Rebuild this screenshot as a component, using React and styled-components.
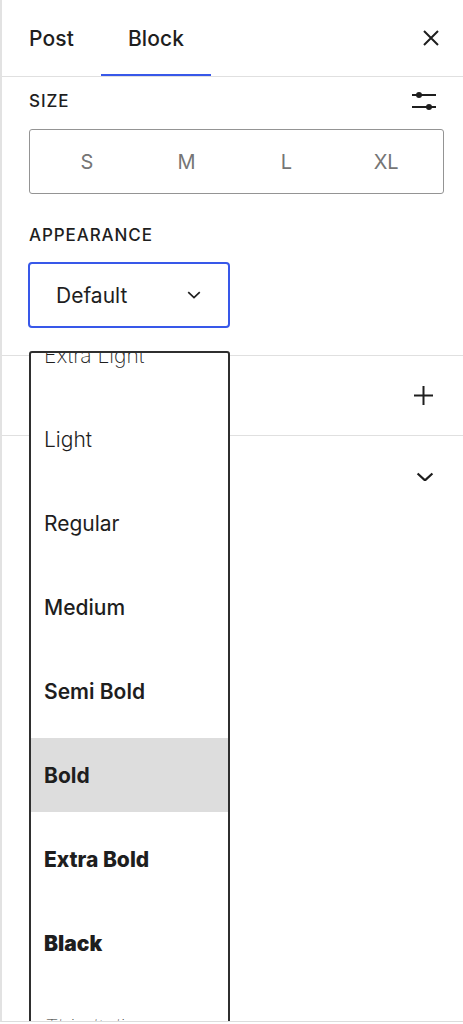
import styled, { createGlobalStyle } from "styled-components";

const GlobalStyle = createGlobalStyle`
	html, body {
		margin: 0;
		padding: 0;
		background: #fff;
	}
	body {
		font-family: Inter, "Noto Sans", "Liberation Sans", sans-serif;
		color: #1e1e1e;
		-webkit-font-smoothing: antialiased;
	}
	* {
		box-sizing: border-box;
	}
`;

const sizes = ["S", "M", "L", "XL"];

const weights = [
	{ name: "Thin", weight: 100 },
	{ name: "Extra Light", weight: 200 },
	{ name: "Light", weight: 300 },
	{ name: "Regular", weight: 400 },
	{ name: "Medium", weight: 500 },
	{ name: "Semi Bold", weight: 600 },
	{ name: "Bold", weight: 700, selected: true },
	{ name: "Extra Bold", weight: 800 },
	{ name: "Black", weight: 900 },
	{ name: "Thin Italic", weight: 100, italic: true },
	{ name: "Extra Light Italic", weight: 200, italic: true },
];

function CloseIcon()
{
	return (
		<svg width="18" height="18" viewBox="0 0 18 18" fill="none" stroke="#1e1e1e" strokeWidth="2">
			<path d="M2 2 L16 16 M16 2 L2 16" />
		</svg>
	);
}

function SlidersIcon()
{
	return (
		<svg width="26" height="20" viewBox="0 0 26 20" fill="#1e1e1e" stroke="#1e1e1e">
			<path d="M1 4 H25 M1 16 H25" strokeWidth="2" />
			<circle cx="8" cy="4" r="3" stroke="none" />
			<circle cx="18" cy="16" r="3" stroke="none" />
		</svg>
	);
}

function PlusIcon()
{
	return (
		<svg width="21" height="21" viewBox="0 0 21 21" fill="none" stroke="#1e1e1e" strokeWidth="2">
			<path d="M10.5 1 V20 M1 10.5 H20" />
		</svg>
	);
}

function ChevronIcon({ size = 18 })
{
	return (
		<svg width={size} height={size * 0.55} viewBox="0 0 18 10" fill="none" stroke="#1e1e1e" strokeWidth="2.2">
			<path d="M1.5 1.5 L9 8.5 L16.5 1.5" />
		</svg>
	);
}

export default function App()
{
	return (
		<>
			<GlobalStyle />
			<Panel>
				<Header>
					<Tab>Post</Tab>
					<Tab $active>Block</Tab>
					<CloseButton><CloseIcon /></CloseButton>
				</Header>

				<Section>
					<LabelRow>
						<Label>Size</Label>
						<IconSlot><SlidersIcon /></IconSlot>
					</LabelRow>
					<Segmented>
						{sizes.map((s) => <SegmentItem key={s}>{s}</SegmentItem>)}
					</Segmented>

					<LabelRow $spaced>
						<Label>Appearance</Label>
					</LabelRow>
					<Select>
						<span>Default</span>
						<ChevronIcon size={14} />
					</Select>
				</Section>

				<PanelRow $bordered>
					<PanelTitle>Color</PanelTitle>
					<PlusIcon />
				</PanelRow>
				<PanelRow $tall>
					<PanelTitle>Advanced</PanelTitle>
					<ChevronIcon />
				</PanelRow>

				<Dropdown>
					<OptionList>
						{weights.map((w) => (
							<Option key={w.name} $weight={w.weight} $italic={w.italic} $selected={w.selected}>
								{w.name}
							</Option>
						))}
					</OptionList>
				</Dropdown>
			</Panel>
		</>
	);
}

const Panel = styled.div`
	position: relative;
	height: 1022px;
	border-left: 2px solid #e2e2e2;
	border-bottom: 1px solid #dcdcdc;
	overflow: hidden;
	background: #fff;
`;

const Header = styled.div`
	display: flex;
	align-items: stretch;
	height: 77px;
	border-bottom: 1px solid #e0e0e0;
`;

const Tab = styled.div`
	display: flex;
	align-items: center;
	padding: 0 27px;
	font-size: 21px;
	font-weight: 500;
	letter-spacing: 0.1px;
	box-shadow: ${(props) => (props.$active ? "inset 0 -2px 0 #3858e9" : "none")};
`;

const CloseButton = styled.div`
	margin-left: auto;
	width: 64px;
	display: flex;
	align-items: center;
	justify-content: center;
`;

const Section = styled.div`
	padding: 0 19px 27px 27px;
`;

const LabelRow = styled.div`
	display: flex;
	align-items: center;
	justify-content: space-between;
	height: 48px;
	margin-top: ${(props) => (props.$spaced ? "17px" : "0")};
	margin-bottom: ${(props) => (props.$spaced ? "3px" : "4px")};
`;

const Label = styled.span`
	font-size: 17px;
	font-weight: 500;
	text-transform: uppercase;
	letter-spacing: 0.9px;
`;

const IconSlot = styled.span`
	display: flex;
	margin-right: 7px;
`;

const Segmented = styled.div`
	display: grid;
	grid-template-columns: repeat(4, 1fr);
	height: 65px;
	padding: 0 7px;
	border: 1px solid #949494;
	border-radius: 3px;
`;

const SegmentItem = styled.div`
	display: flex;
	align-items: center;
	justify-content: center;
	font-size: 20px;
	color: #757575;
`;

const Select = styled.div`
	display: flex;
	align-items: center;
	justify-content: space-between;
	width: 202px;
	height: 66px;
	margin-left: -1px;
	padding: 0 27px 0 26px;
	border: 2px solid #3858e9;
	border-radius: 4px;
	font-size: 21px;
`;

const PanelRow = styled.div`
	display: flex;
	align-items: center;
	justify-content: space-between;
	height: ${(props) => (props.$tall ? "82px" : "80px")};
	padding: 0 29px 0 27px;
	border-top: 1px solid #e0e0e0;
`;

const PanelTitle = styled.span`
	font-size: 20px;
	font-weight: 500;
`;

const Dropdown = styled.div`
	position: absolute;
	top: 351px;
	left: 27px;
	width: 201px;
	bottom: -20px;
	border: 2px solid #2f2f2f;
	border-radius: 3px;
	background: #fff;
	overflow: hidden;
`;

const OptionList = styled.div`
	margin-top: -119px;
	display: flex;
	flex-direction: column;
	gap: 10px;
`;

const Option = styled.div`
	display: flex;
	align-items: center;
	height: 74px;
	padding-left: 13px;
	font-size: 21px;
	font-weight: ${(props) => props.$weight};
	font-style: ${(props) => (props.$italic ? "italic" : "normal")};
	background: ${(props) => (props.$selected ? "#dddddd" : "transparent")};
	white-space: nowrap;
`;
